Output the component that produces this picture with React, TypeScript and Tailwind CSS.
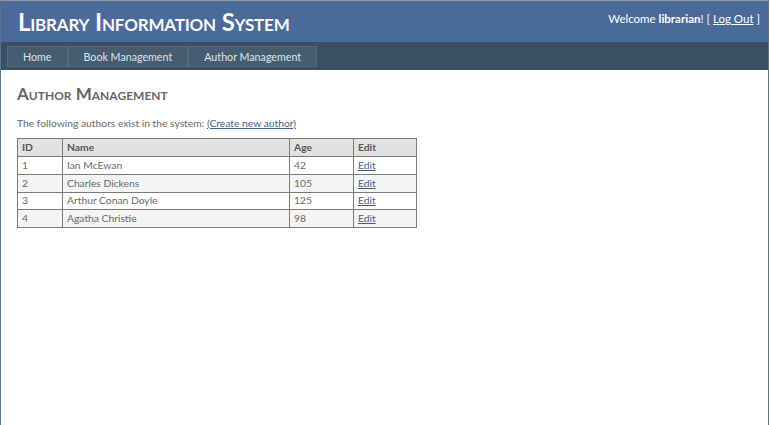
import React from "react";

interface Author {
  id: number;
  name: string;
  age: number;
}

const authors: Author[] = [
  { id: 1, name: "Ian McEwan", age: 42 },
  { id: 2, name: "Charles Dickens", age: 105 },
  { id: 3, name: "Arthur Conan Doyle", age: 125 },
  { id: 4, name: "Agatha Christie", age: 98 },
];

const menu = ["Home", "Book Management", "Author Management"];

export default function App() {
  return (
    <div className="w-[770px] h-[425px] bg-white font-['Lato',sans-serif]">
      <div className="w-[769px] h-[425px] border-t border-t-[#9a9a9a] border-x border-x-[#5a7190] flex flex-col">
        {/* header */}
        <div className="h-[41px] bg-[#4a6a9c] flex justify-between">
          <h1 className="pl-[17px] pt-[7px] text-[24px] leading-[27px] tracking-[-0.2px] font-bold text-[#f9f9f9] [font-variant:small-caps]">
            Library Information System
          </h1>
          <div className="pt-[9px] pr-[8px] text-[11.5px] text-white">
            Welcome <span className="font-bold">librarian</span>! [ <a href="#" className="underline">Log Out</a> ]
          </div>
        </div>

        {/* menu */}
        <div className="h-[28px] bg-[#3a4f63] pl-[6px] pt-[4px]">
          <ul className="flex">
            {menu.map((m) => (
              <li key={m}>
                <a href="#" className="block h-[21px] leading-[19px] px-[15px] bg-[#465c71] border border-[#52687e] text-[10.7px] text-[#dde4ec]">
                  {m}
                </a>
              </li>
            ))}
          </ul>
        </div>

        {/* main */}
        <div className="px-[16px] pt-[14px] text-[#696969]">
          <h2 className="text-[17px] leading-[20px] text-[#666] font-bold [font-variant:small-caps]">Author Management</h2>
          <p className="mt-[11px] text-[10.3px] leading-[16px]">
            The following authors exist in the system:{" "}
            <a href="#" className="underline text-[#3e5f8a]">(Create new author)</a>
          </p>
          <table className="mt-[7px] w-[399px] border-collapse border border-[#666] text-[10.3px] table-fixed">
            <thead>
              <tr className="h-[18px] bg-[#e2e2e2]">
                <th className="w-[45px] border border-[#7a7a7a] text-left font-bold text-[#555] pl-[4px]">ID</th>
                <th className="w-[227px] border border-[#7a7a7a] text-left font-bold text-[#555] pl-[4px]">Name</th>
                <th className="w-[64px] border border-[#7a7a7a] text-left font-bold text-[#555] pl-[4px]">Age</th>
                <th className="w-[63px] border border-[#7a7a7a] text-left font-bold text-[#555] pl-[4px]">Edit</th>
              </tr>
            </thead>
            <tbody>
              {authors.map((a, i) => (
                <tr key={a.id} className={i % 2 === 1 ? "h-[17.75px] bg-[#f4f4f4]" : "h-[17.75px] bg-white"}>
                  <td className="border border-[#7a7a7a] pl-[4px] leading-[15px]">{a.id}</td>
                  <td className="border border-[#7a7a7a] pl-[4px] leading-[15px]">{a.name}</td>
                  <td className="border border-[#7a7a7a] pl-[4px] leading-[15px]">{a.age}</td>
                  <td className="border border-[#7a7a7a] pl-[4px] leading-[15px]">
                    <a href="#" className="underline text-[#3e5f8a]">Edit</a>
                  </td>
                </tr>
              ))}
            </tbody>
          </table>
        </div>
      </div>
    </div>
  );
}
